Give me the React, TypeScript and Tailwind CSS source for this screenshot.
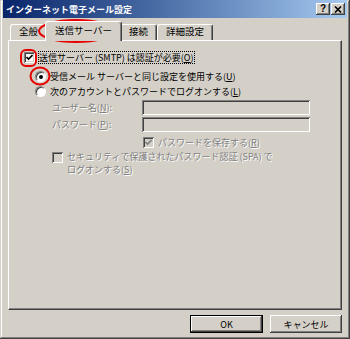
import React from "react";

const raised =
  "shadow-[inset_-1px_-1px_#404040,inset_1px_1px_#ffffff,inset_-2px_-2px_#808080,inset_2px_2px_#d4d0c8]";
const sunken =
  "shadow-[inset_1px_1px_#808080,inset_-1px_-1px_#ffffff,inset_2px_2px_#404040,inset_-2px_-2px_#d4d0c8]";
const dim = "text-[#808080] [text-shadow:1px_1px_0_#ffffff]";

function Check({ checked, disabled }: { checked?: boolean; disabled?: boolean }) {
  return (
    <span
      className={`w-[11px] h-[11px] shrink-0 flex items-center justify-center ${sunken} ${
        disabled ? "bg-[#d4d0c8]" : "bg-white"
      }`}
    >
      {checked && (
        <svg width="7" height="7" viewBox="0 0 7 7">
          <path d="M0.5 3 L2.5 5 L6.5 1" fill="none" stroke={disabled ? "#808080" : "#000"} strokeWidth="1.6" />
        </svg>
      )}
    </span>
  );
}

function Radio({ checked }: { checked?: boolean }) {
  return (
    <span className="w-[11px] h-[11px] shrink-0 rounded-full bg-white flex items-center justify-center border border-t-[#808080] border-l-[#808080] border-b-white border-r-white shadow-[inset_1px_1px_#404040]">
      {checked && <span className="w-[4px] h-[4px] rounded-full bg-black" />}
    </span>
  );
}

function Tab({ label, active }: { label: string; active?: boolean }) {
  if (active) {
    return (
      <div className="relative z-10 -mx-[2px] -mb-[1px] h-[20px] px-[9px] pt-[3px] text-[9.5px] bg-[#d4d0c8] border-t border-l border-white border-r border-r-[#404040] rounded-t-[3px] shadow-[inset_-1px_0_#808080]">
        {label}
      </div>
    );
  }
  return (
    <div className="h-[16px] px-[8px] pt-[1px] text-[9.5px] border-t border-l border-white border-r border-r-[#404040] rounded-t-[3px] shadow-[inset_-1px_0_#808080]">
      {label}
    </div>
  );
}

export default function App() {
  return (
    <div className="relative w-[350px] h-[339px] overflow-hidden bg-[#d4d0c8] text-[9px] leading-[11px] text-black font-['Noto_Sans_CJK_JP',sans-serif] shadow-[inset_-1px_-1px_#404040,inset_1px_1px_#d4d0c8,inset_-2px_-2px_#808080,inset_2px_2px_#ffffff]">
      <div className="flex flex-col h-full px-[3px] pb-[3px]">
        {/* title bar */}
        <div className="h-[18px] flex items-center justify-between pl-[3px] pr-[2px] bg-gradient-to-r from-[#0a246a] to-[#a6caf0]">
          <span className="text-white font-bold text-[9px]">インターネット電子メール設定</span>
          <div className="flex">
            <span className={`w-[14px] h-[12px] bg-[#d4d0c8] ${raised} flex items-center justify-center font-bold text-[10px] leading-none font-['Liberation_Sans',sans-serif]`}>
              ?
            </span>
            <span className={`ml-[1px] w-[14px] h-[12px] bg-[#d4d0c8] ${raised} flex items-center justify-center`}>
              <svg width="8" height="7" viewBox="0 0 8 7">
                <path d="M1 0.5 L7 6.5 M7 0.5 L1 6.5" stroke="#000" strokeWidth="1.6" />
              </svg>
            </span>
          </div>
        </div>

        {/* tabs */}
        <div className="mt-[4px] ml-[7px] flex items-end h-[18px]">
          <Tab label="全般" />
          <Tab label="送信サーバー" active />
          <Tab label="接続" />
          <Tab label="詳細設定" />
        </div>

        {/* panel */}
        <div className="ml-[5px] w-[334px] h-[270px] border-t border-l border-white border-r border-b border-r-[#404040] border-b-[#404040] shadow-[inset_-1px_-1px_#808080] flex flex-col">
          <div className="mt-[10px] ml-[15px] flex items-center h-[13px]">
            <Check checked />
            <span className="ml-[3px] px-[1px] outline outline-1 outline-dotted outline-black -outline-offset-1 leading-[13px]">
              送信サーバー (SMTP) は認証が必要(<u>O</u>)
            </span>
          </div>

          <div className="mt-[6px] ml-[26px] flex items-center h-[13px]">
            <Radio checked />
            <span className="ml-[4px]">受信メール サーバーと同じ設定を使用する(<u>U</u>)</span>
          </div>
          <div className="mt-[2px] ml-[26px] flex items-center h-[13px]">
            <Radio />
            <span className="ml-[4px]">次のアカウントとパスワードでログオンする(<u>L</u>)</span>
          </div>

          <div className="mt-[2px] ml-[43px] flex items-center h-[15px]">
            <span className={`w-[90px] ${dim}`}>
              ユーザー名(<u>N</u>):
            </span>
            <span className={`w-[168px] h-[15px] bg-[#d4d0c8] ${sunken}`} />
          </div>
          <div className="mt-[2px] ml-[43px] flex items-center h-[15px]">
            <span className={`w-[90px] ${dim}`}>
              パスワード(<u>P</u>):
            </span>
            <span className={`w-[168px] h-[15px] bg-[#d4d0c8] ${sunken}`} />
          </div>

          <div className="mt-[4px] ml-[134px] flex items-center h-[12px]">
            <Check checked disabled />
            <span className={`ml-[4px] ${dim}`}>
              パスワードを保存する(<u>R</u>)
            </span>
          </div>

          <div className="mt-[3px] ml-[43px] flex items-start">
            <span className="mt-[1px]">
              <Check disabled />
            </span>
            <div className={`ml-[4px] -mt-[1px] flex flex-col ${dim}`}>
              <span className="leading-[13px]">セキュリティで保護されたパスワード認証 (SPA) で</span>
              <span className="leading-[13px]">
                ログオンする(<u>S</u>)
              </span>
            </div>
          </div>
        </div>

        {/* buttons */}
        <div className="mt-[5px] flex justify-end gap-[7px] pr-[5px]">
          <div className="w-[73px] h-[18px] border border-black">
            <div className={`w-full h-full ${raised} flex items-center justify-center`}>OK</div>
          </div>
          <div className={`w-[72px] h-[18px] ${raised} flex items-center justify-center`}>キャンセル</div>
        </div>
      </div>

      {/* red annotation marks */}
      <svg className="absolute inset-0 pointer-events-none" width="350" height="339" viewBox="0 0 350 339">
        <ellipse cx="76" cy="31" rx="37" ry="11" fill="none" stroke="#e60000" strokeWidth="2" />
        <rect x="21" y="50" width="15" height="16" rx="5" fill="none" stroke="#e60000" strokeWidth="2" />
        <ellipse cx="40" cy="76" rx="9.5" ry="8.5" fill="none" stroke="#e60000" strokeWidth="2" />
      </svg>
    </div>
  );
}
